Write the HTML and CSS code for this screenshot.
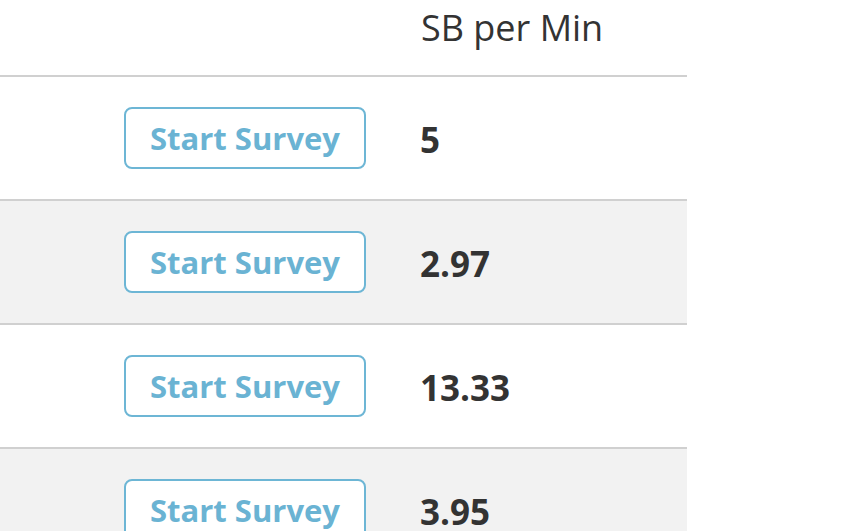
FILE: index.html
```html
<!DOCTYPE html>
<html>
<head>
<meta charset="utf-8">
<link rel="stylesheet" href="styles.css">
</head>
<body>
<table class="surveys">
  <thead>
    <tr><th class="c-action"></th><th class="c-rate">SB per Min</th></tr>
  </thead>
  <tbody>
    <tr><td class="c-action"><button class="btn">Start Survey</button></td><td class="c-rate">5</td></tr>
    <tr class="alt"><td class="c-action"><button class="btn">Start Survey</button></td><td class="c-rate">2.97</td></tr>
    <tr><td class="c-action"><button class="btn">Start Survey</button></td><td class="c-rate">13.33</td></tr>
    <tr class="alt"><td class="c-action"><button class="btn">Start Survey</button></td><td class="c-rate">3.95</td></tr>
  </tbody>
</table>
</body>
</html>
```
FILE: styles.css
```css
html, body { margin: 0; padding: 0; background: #fff; }
body { font-family: "Open Sans", "Liberation Sans", sans-serif; color: #333; overflow: hidden; }
.surveys { width: 687px; border-collapse: collapse; }
.surveys th { height: 76px; font-weight: 400; font-size: 36px; line-height: 44px; text-align: left; vertical-align: top; padding: 6px 0 0 0; border-bottom: 2px solid #d0d0d0; box-sizing: border-box; }
.surveys td { height: 124px; border-bottom: 2px solid #d0d0d0; box-sizing: border-box; padding: 0; vertical-align: middle; }
.surveys tr.alt td { background: #f2f2f2; }
.c-action { width: 400px; text-align: right; padding-right: 34px !important; }
.c-rate { padding-left: 20px !important; font-weight: 700; font-size: 35px; line-height: 44px; }
.surveys td.c-rate { padding-top: 4px !important; }
.surveys th.c-rate { font-weight: 400; padding-left: 21px !important; }
.btn { width: 242px; height: 62px; border: 2px solid #6db6d5; border-radius: 8px; background: #fff; color: #6ab3d3; font-family: "Open Sans", "Liberation Sans", sans-serif; font-weight: 700; font-size: 31px; padding: 0; cursor: pointer; }
```
